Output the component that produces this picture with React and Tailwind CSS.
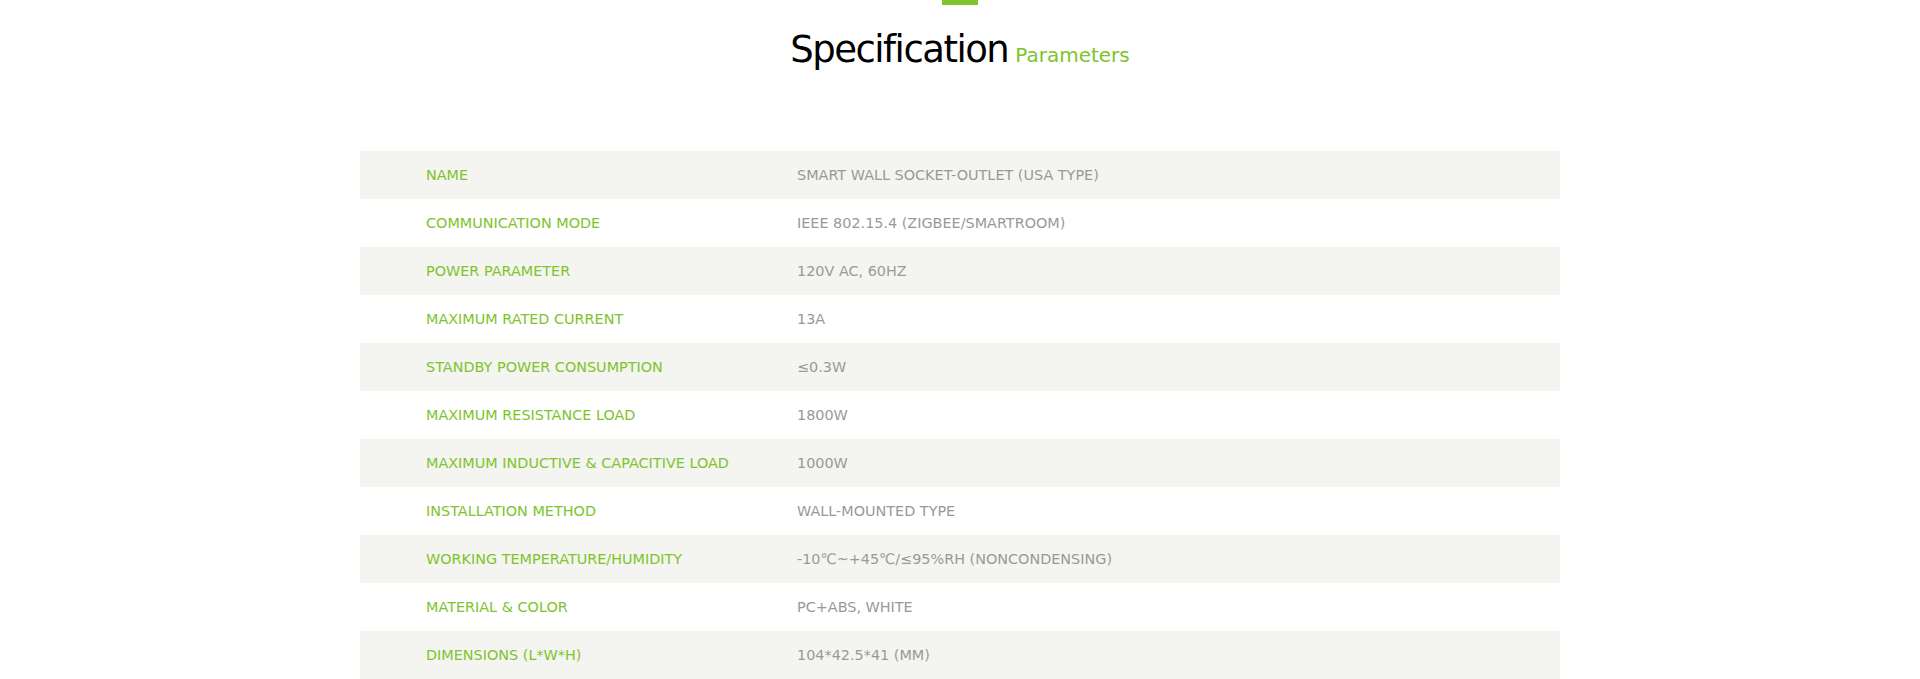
const specs = [
  ["NAME", "SMART WALL SOCKET-OUTLET (USA TYPE)"],
  ["COMMUNICATION MODE", "IEEE 802.15.4 (ZIGBEE/SMARTROOM)"],
  ["POWER PARAMETER", "120V AC, 60HZ"],
  ["MAXIMUM RATED CURRENT", "13A"],
  ["STANDBY POWER CONSUMPTION", "≤0.3W"],
  ["MAXIMUM RESISTANCE LOAD", "1800W"],
  ["MAXIMUM INDUCTIVE & CAPACITIVE LOAD", "1000W"],
  ["INSTALLATION METHOD", "WALL-MOUNTED TYPE"],
  ["WORKING TEMPERATURE/HUMIDITY", "-10℃~+45℃/≤95%RH (NONCONDENSING)"],
  ["MATERIAL & COLOR", "PC+ABS, WHITE"],
  ["DIMENSIONS (L*W*H)", "104*42.5*41 (MM)"],
];

export default function App() {
  return (
    <div className="bg-white w-full font-['DejaVu_Sans',Verdana,sans-serif]">
      {/* Section heading */}
      <div className="flex flex-col items-center">
        <div className="w-[36px] h-[5px] bg-[#80c32c]" />
        <h2 className="mt-[26px] flex items-baseline gap-[7px] leading-none">
          <span className="text-[37px] text-black tracking-[-1.5px]">Specification</span>
          <span className="text-[20px] text-[#80c32c]">Parameters</span>
        </h2>
      </div>

      {/* Spec table */}
      <div className="w-[1200px] mx-auto mt-[83px]">
        {specs.map(([label, value], index) => (
          <div
            key={label}
            className={`flex h-[48px] items-center pt-[2px] text-[14.4px] ${
              index % 2 === 0 ? "bg-[#f4f5f1]" : "bg-white"
            }`}
          >
            <div className="w-[437px] pl-[66px] text-[#80c32c]">{label}</div>
            <div className="flex-1 text-[#999999]">{value}</div>
          </div>
        ))}
      </div>
    </div>
  );
}
